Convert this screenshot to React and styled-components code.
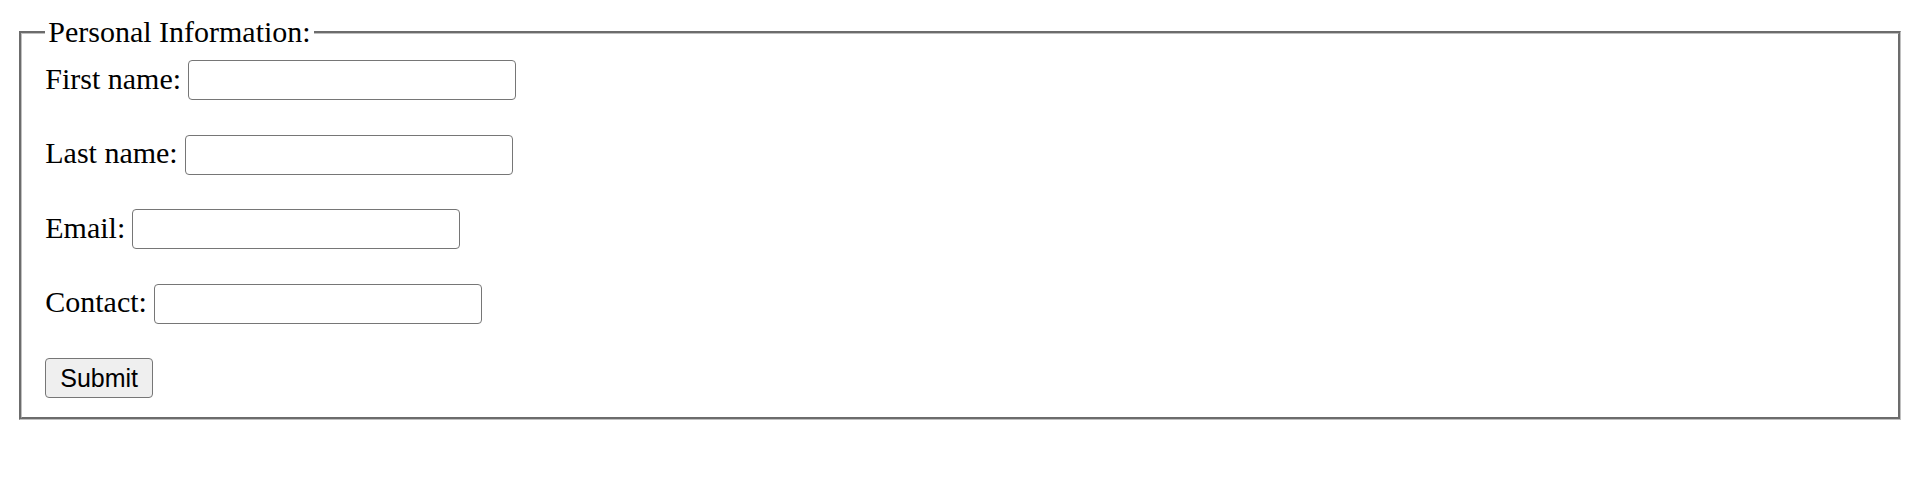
import React from 'react';
import styled, { createGlobalStyle } from 'styled-components';

const GlobalStyle = createGlobalStyle`
  body {
    margin: 0;
    background: #ffffff;
    color: #000000;
    font-family: 'Liberation Serif', 'Times New Roman', serif;
  }
`;

const fields = [
  { id: 'fname', label: 'First name:' },
  { id: 'lname', label: 'Last name:' },
  { id: 'email', label: 'Email:' },
  { id: 'contact', label: 'Contact:' }
];

const App = () => {
  return (
    <Page>
      <GlobalStyle />
      <Fieldset>
        <Legend>Personal Information:</Legend>
        <Form onSubmit={e => e.preventDefault()}>
          {fields.map(field => (
            <Row key={field.id}>
              <Label htmlFor={field.id}>{field.label}</Label>
              <TextInput id={field.id} type='text' />
            </Row>
          ))}
          <SubmitButton type='submit'>Submit</SubmitButton>
        </Form>
      </Fieldset>
    </Page>
  );
};

const Page = styled.div`
  padding: 15px 18.75px;
`;

const Fieldset = styled.fieldset`
  margin: 0;
  padding: 10.5px 22.5px 18.75px 23.5px;
  border: 3px groove rgb(192, 192, 192);
  min-inline-size: 0;
`;

const Legend = styled.legend`
  padding: 0 3px;
  font-size: 30px;
  line-height: 34.5px;
  font-family: 'Liberation Serif', 'Times New Roman', serif;
`;

const Form = styled.form`
  display: flex;
  flex-direction: column;
  align-items: flex-start;
  gap: 34.5px;
  margin: 0;
`;

const Row = styled.div`
  display: flex;
  align-items: baseline;
  gap: 7px;
`;

const Label = styled.label`
  font-size: 30px;
  line-height: 34.5px;
  font-family: 'Liberation Serif', 'Times New Roman', serif;
`;

const TextInput = styled.input`
  box-sizing: border-box;
  width: 328px;
  height: 40px;
  margin: 0;
  padding: 2px 4px;
  border: 1.5px solid #767676;
  border-radius: 4px;
  background: #ffffff;
  font-family: 'Liberation Sans', Arial, sans-serif;
  font-size: 25px;
`;

const SubmitButton = styled.button`
  box-sizing: border-box;
  height: 40px;
  margin: 0;
  padding: 1px 14px;
  border: 1.5px solid #767676;
  border-radius: 4px;
  background: #efefef;
  color: #000000;
  font-family: 'Liberation Sans', Arial, sans-serif;
  font-size: 25px;
  line-height: 1;
`;

export default App;
